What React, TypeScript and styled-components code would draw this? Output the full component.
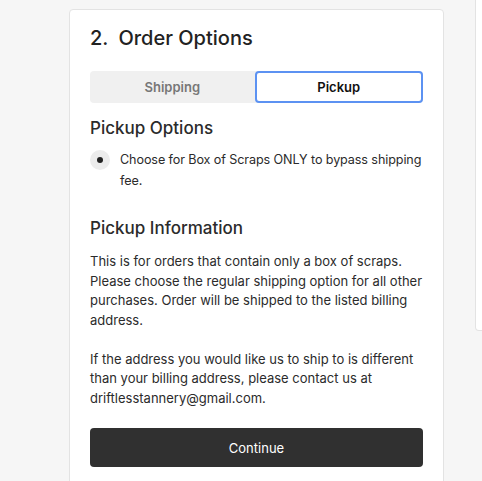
import React, { useState } from "react";
import styled, { createGlobalStyle } from "styled-components";

const GlobalStyle = createGlobalStyle`
  html, body {
    margin: 0;
    padding: 0;
    background: #f6f6f6;
    font-family: Inter, "Noto Sans", "Liberation Sans", sans-serif;
    color: #2b2b2b;
  }
`;

const PageWrapper = styled.div`
  display: flex;
  align-items: flex-start;
  gap: 31px;
  padding-left: 69px;
  width: 482px;
  height: 481px;
  box-sizing: border-box;
  overflow: hidden;
`;

const Card = styled.section`
  flex: 0 0 375px;
  box-sizing: border-box;
  margin-top: 9px;
  padding: 15px 20px 20px;
  background: #fff;
  border: 1px solid #e3e3e3;
  border-radius: 4px;
  min-height: 490px;
`;

const SideCard = styled.aside`
  flex: 0 0 200px;
  height: 331px;
  box-sizing: border-box;
  background: #fff;
  border: 1px solid #e3e3e3;
  border-top: none;
  border-radius: 0 0 4px 4px;
`;

const Title = styled.h2`
  margin: 0 0 20px;
  font-size: 20px;
  font-weight: 500;
  line-height: 26px;
  color: #222;

  span {
    margin-right: 10px;
  }
`;

const TabBar = styled.div`
  display: flex;
  height: 32px;
  background: #f0f0f0;
  border-radius: 4px;
  margin-bottom: 13px;
`;

const Tab = styled.button<{ $active?: boolean }>`
  flex: 1;
  border: ${(p) => (p.$active ? "2px solid #5c92f2" : "none")};
  border-radius: 4px;
  background: ${(p) => (p.$active ? "#fff" : "transparent")};
  color: ${(p) => (p.$active ? "#111" : "#777")};
  font-family: inherit;
  font-size: 13px;
  font-weight: 600;
  cursor: pointer;
  padding: 0;
`;

const SubHeading = styled.h3<{ $space?: number }>`
  margin: 0 0 ${(p) => p.$space ?? 10}px;
  font-size: 17px;
  font-weight: 500;
  line-height: 24px;
  color: #2b2b2b;
`;

const RadioRow = styled.label`
  display: flex;
  gap: 10px;
  align-items: flex-start;
  margin-bottom: 25px;
  cursor: pointer;
`;

const RadioDot = styled.span`
  flex: 0 0 20px;
  height: 20px;
  border-radius: 50%;
  background: #ececec;
  display: flex;
  align-items: center;
  justify-content: center;

  &::after {
    content: "";
    width: 6px;
    height: 6px;
    border-radius: 50%;
    background: #222;
  }
`;

const RadioText = styled.span`
  font-size: 12.6px;
  letter-spacing: -0.1px;
  line-height: 21px;
  margin-top: -1px;
  color: #2b2b2b;
`;

const InfoText = styled.p`
  margin: 0 0 19.5px;
  font-size: 13px;
  line-height: 19.6px;
  color: #2b2b2b;
`;

const ContinueButton = styled.button`
  display: block;
  width: 100%;
  height: 39px;
  margin-top: 5px;
  border: none;
  border-radius: 4px;
  background: #303030;
  color: #fff;
  font-family: inherit;
  font-size: 13px;
  font-weight: 400;
  cursor: pointer;
`;

export default function App() {
  const [tab, setTab] = useState<"shipping" | "pickup">("pickup");
  return (
    <>
      <GlobalStyle />
      <PageWrapper>
        <Card>
          <Title>
            <span>2.</span>Order Options
          </Title>
          <TabBar>
            <Tab $active={tab === "shipping"} onClick={() => setTab("shipping")}>
              Shipping
            </Tab>
            <Tab $active={tab === "pickup"} onClick={() => setTab("pickup")}>
              Pickup
            </Tab>
          </TabBar>
          <SubHeading $space={10}>Pickup Options</SubHeading>
          <RadioRow>
            <RadioDot />
            <RadioText>
              Choose for Box of Scraps ONLY to bypass shipping fee.
            </RadioText>
          </RadioRow>
          <SubHeading $space={12}>Pickup Information</SubHeading>
          <InfoText>
            This is for orders that contain only a box of scraps. Please choose
            the regular shipping option for all other purchases. Order will be
            shipped to the listed billing address.
          </InfoText>
          <InfoText>
            If the address you would like us to ship to is different than your
            billing address, please contact us at driftlesstannery@gmail.com.
          </InfoText>
          <ContinueButton>Continue</ContinueButton>
        </Card>
        <SideCard />
      </PageWrapper>
    </>
  );
}
